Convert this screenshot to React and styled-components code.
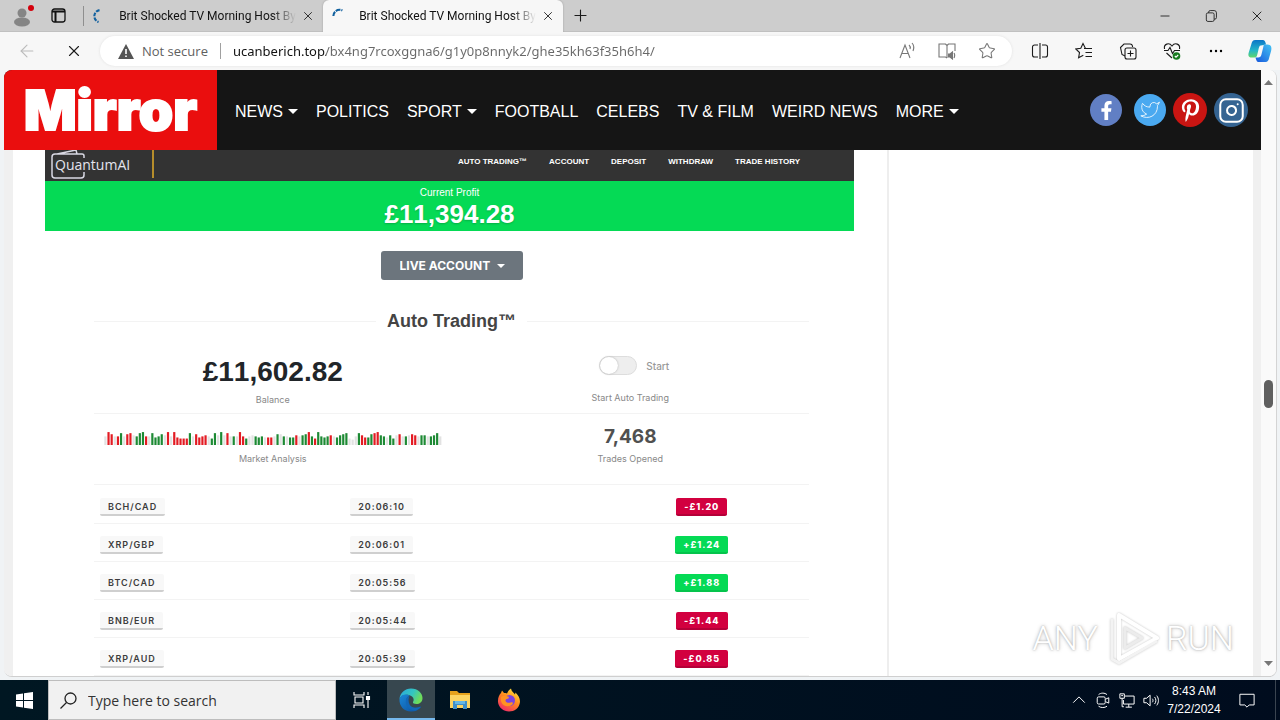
import { useState } from "react";
import styled, { createGlobalStyle } from "styled-components";
import { Instagram, Plus, X, Minus, ArrowLeft, Star, Search } from "lucide-react";
import { FaFacebookF, FaPinterestP } from "react-icons/fa";
import { FiTwitter } from "react-icons/fi";

const GlobalStyle = createGlobalStyle`
  * {
    box-sizing: border-box;
  }
  body {
    margin: 0;
    background: #f0f3f5;
    font-family: "Liberation Sans", Arial, sans-serif;
  }
  button, input, select {
    font: inherit;
    color: inherit;
    border: 0;
    padding: 0;
    background: none;
  }
  a {
    color: inherit;
    text-decoration: none;
  }
`;

const segoe = `"Open Sans", "Noto Sans", sans-serif`;
const inter = `Inter, "Liberation Sans", sans-serif`;

/* ===================================================
   Window
   =================================================== */
const Desktop = styled.div`
  display: flex;
  flex-direction: column;
  height: 100vh;
  overflow: hidden;
`;

const IconButton = styled.button`
  display: flex;
  align-items: center;
  align-self: center;
  justify-content: center;
  width: ${(props) => props.$width || 16}px;
  height: 24px;
  flex-shrink: 0;
  color: ${(props) => props.$color || "#1b1b1b"};
`;

/* ===================================================
   Tabs
   =================================================== */
const TabStrip = styled.div`
  display: flex;
  align-items: stretch;
  height: 32px;
  flex-shrink: 0;
  background: #cdcdcd;
  border-bottom: 1px solid #c0c0c0;
`;

const TabTools = styled.div`
  display: flex;
  align-items: center;
  gap: 16px;
  padding-left: 12px;
  width: 83px;
`;

const Tab = styled.div`
  display: flex;
  align-items: center;
  width: 240px;
  padding: 0 8px;
  gap: 5px;
  margin-bottom: -1px;
  background: ${(props) => (props.$active ? "#f7f7f7" : "transparent")};
  border-radius: ${(props) => (props.$active ? "6px 6px 0 0" : 0)};
  box-shadow: ${(props) => (props.$active ? "0 0 2px #999" : "inset 1px 0 #8f8f8f")};
  clip-path: ${(props) => (props.$active ? "inset(-2px -2px 0)" : "inset(6px 0)")};
`;

const TabTitle = styled.span`
  flex: 1;
  margin-left: 8px;
  white-space: nowrap;
  font-family: Roboto, sans-serif;
  font-size: 12px;
  line-height: 20px;
  color: #111;
  mask-image: linear-gradient(to left, transparent, #000 24px);
`;

const WindowControls = styled.div`
  display: flex;
  align-items: center;
  margin-left: auto;
`;

/* ===================================================
   Toolbar
   =================================================== */
const Toolbar = styled.div`
  display: flex;
  align-items: center;
  height: 38px;
  flex-shrink: 0;
  background: #f7f7f7;
`;

const Omnibox = styled.div`
  display: flex;
  flex: 1;
  align-items: center;
  height: 30px;
  margin-left: 6px;
  padding: 0 13px 0 18px;
  border-radius: 15px;
  background: #fff;
  box-shadow: 0 0 3px #e0e0e0;
  font-family: ${segoe};
  font-size: 13px;
`;

const NotSecure = styled.span`
  display: flex;
  align-items: center;
  gap: 8px;
  width: 103px;
  height: 16px;
  margin-right: 12px;
  border-right: 1px solid #a0a0a0;
  color: #5f5f5f;
  white-space: nowrap;
`;

const UrlInput = styled.input`
  flex: 1;
  min-width: 0;
  height: 24px;
  background: linear-gradient(to right, #111 93px, #686868 93px);
  background-clip: text;
  -webkit-text-fill-color: transparent;
  font-family: "Noto Sans", sans-serif;
  outline: none;
`;

const OmniActions = styled.div`
  display: flex;
  gap: 16px;
`;

const ToolActions = styled.div`
  display: flex;
  align-items: center;
  gap: 20px;
  padding: 0 8px 0 16px;
`;

/* ===================================================
   Viewport and site header
   =================================================== */
const Viewport = styled.div`
  display: flex;
  flex: 1;
  min-height: 0;
  margin: 0 3px 3px 4px;
  border-radius: 8px;
  overflow: hidden;
  background: #fff;
  border-right: 1px solid #d4d4d4;
  border-bottom: 1px solid #cfcfcf;
`;

const Page = styled.div`
  display: flex;
  flex: 1;
  flex-direction: column;
  min-width: 0;
`;

const SiteHeader = styled.header`
  position: relative;
  z-index: 1;
  display: flex;
  align-items: center;
  height: 80px;
  flex-shrink: 0;
  padding-right: 13px;
  background: #151515;
  color: #fff;
`;

const Brand = styled.a`
  display: flex;
  align-items: center;
  justify-content: center;
  width: 213px;
  height: 80px;
  background: #ea0e0e;
  font-family: ${inter};
  font-size: 55px;
  font-weight: 900;
  -webkit-text-stroke: 2px #fff;
`;

const SiteNav = styled.nav`
  display: flex;
  flex: 1;
  gap: 18px;
  padding: 3px 0 0 18px;
  font-size: 16px;
  line-height: 20px;
  white-space: nowrap;
`;

const SiteLink = styled.a`
  display: flex;
  align-items: center;
  gap: 5px;
`;

const Caret = styled.span`
  width: 0;
  height: 0;
  border: ${(props) => props.$size || 5}px solid transparent;
  border-top-color: currentColor;
  border-bottom: 0;
`;

const Socials = styled.div`
  display: flex;
  align-items: center;
  gap: ${(props) => props.$gap}px;
`;

const Social = styled.a`
  display: flex;
  align-items: center;
  justify-content: center;
  width: ${(props) => props.$size}px;
  height: ${(props) => props.$size}px;
  border-radius: 50%;
  background: ${(props) => props.$bg};
`;

const PageBody = styled.div`
  display: flex;
  flex: 1;
  min-height: 0;
  overflow: hidden;
  padding: 0 8px 0 9px;
  background: #f0f0f0;
`;

const Article = styled.main`
  flex: 1;
  min-width: 0;
  padding: 0 33px 0 32px;
  background: #fff;
`;

const Aside = styled.aside`
  flex: 0 0 366px;
  background: #fff;
  border-left: 2px solid #eeeeee;
`;

/* ===================================================
   Trading panel
   =================================================== */
const TradeHeader = styled.div`
  display: flex;
  align-items: center;
  justify-content: space-between;
  height: 40px;
  margin-top: -9px;
  padding: 0 54px 0 6px;
  background: #333;
  color: #fff;
`;

const TradeBrand = styled.div`
  position: relative;
  display: flex;
  align-items: center;
  width: 103px;
  height: 28px;
  margin-top: 6px;
  padding-left: 4px;
  border-right: 2px solid #b58d2b;
  font-family: ${segoe};
  font-size: 14px;
  color: #e4e4ee;

  svg {
    position: absolute;
    left: 0;
    top: 0;
  }
`;

const TradeNav = styled.nav`
  display: flex;
  gap: 22px;
  padding-top: 2px;
  font-size: 8px;
  font-weight: 700;
  line-height: 12px;
`;

const ProfitBar = styled.section`
  height: 50px;
  padding-top: 6px;
  background: #05da55;
  color: #fff;
  text-align: center;
`;

const ProfitLabel = styled.div`
  font-size: 10px;
  line-height: 12px;
`;

const ProfitValue = styled.div`
  font-size: 26px;
  font-weight: 700;
  font-kerning: none;
  line-height: 30px;
  text-shadow: 0 1px 2px rgba(0, 0, 0, 0.2);
`;

const Panel = styled.section`
  padding: 20px 45px 0 49px;
  font-family: ${inter};
`;

const AccountPicker = styled.label`
  position: relative;
  display: block;
  width: 142px;
  margin: 0 auto;
  color: #fff;

  ${Caret} {
    position: absolute;
    right: 18px;
    top: 13px;
  }
`;

const AccountSelect = styled.select`
  display: block;
  appearance: none;
  width: 100%;
  height: 29px;
  padding-left: 19px;
  border-radius: 3px;
  background: #6c757d;
  font-size: 12px;
  font-weight: 700;
`;

const PanelTitle = styled.h2`
  display: flex;
  align-items: center;
  gap: 11px;
  margin: 30px 0 11px;
  font-family: "Liberation Sans", Arial, sans-serif;
  font-size: 18px;
  line-height: 22px;
  color: #444;

  &::before,
  &::after {
    content: "";
    flex: 1;
    height: 1px;
    background: #f3f3f3;
  }
`;

const StatRow = styled.div`
  display: grid;
  grid-template-columns: 1fr 1fr;
  height: 71px;
  border-bottom: 1px solid #f3f3f3;
`;

const Stat = styled.div`
  display: flex;
  flex-direction: column;
  align-items: center;
  justify-content: flex-end;
  gap: ${(props) => props.$gap}px;
  padding-bottom: ${(props) => props.$bottom}px;
`;

const Balance = styled.div`
  font-family: "Liberation Sans", Arial, sans-serif;
  font-size: 28px;
  font-weight: 700;
  font-kerning: none;
  line-height: 32px;
  color: #212529;
`;

const TradeCount = styled.div`
  font-size: 19px;
  font-weight: 700;
  line-height: 24px;
  color: #505050;
`;

const StatLabel = styled.div`
  font-size: 9px;
  line-height: 12px;
  color: #888;
`;

const SwitchLabel = styled.label`
  display: flex;
  align-items: center;
  gap: 9px;
  padding-left: 8px;
  font-size: 10px;
  font-weight: 500;
  color: #999;
`;

const Switch = styled.input`
  appearance: none;
  width: 38px;
  height: 19px;
  margin: 0;
  border: 1px solid #ddd;
  border-radius: 10px;
  background: #eee;

  &::before {
    content: "";
    display: block;
    width: 18px;
    height: 17px;
    border-radius: 50%;
    background: #fff;
    box-shadow: 0 0 2px #aaa;
  }
  &:checked::before {
    margin-left: auto;
  }
`;

const TradeTable = styled.table`
  width: 100%;
  border-collapse: collapse;
  table-layout: fixed;
`;

const TradeRow = styled.tr`
  height: 38px;
  border-bottom: 1px solid #f3f3f3;
`;

const TradeCell = styled.td`
  width: ${(props) => props.$width};
  padding: 4px 6px 0;
  text-align: ${(props) => (props.$center ? "center" : "left")};
`;

const Chip = styled.span`
  display: inline-block;
  padding: 3px 8px 1px;
  background: #f8f8f8;
  border-bottom: 2px solid #cfcfcf;
  border-radius: 2px;
  color: #3c3c3c;
  font-size: 9px;
  font-weight: 600;
  line-height: 12px;
  letter-spacing: 1px;
  vertical-align: middle;
`;

const Result = styled(Chip)`
  background: ${(props) => (props.$win ? "#05da55" : "#d2003f")};
  border-color: ${(props) => (props.$win ? "#05c44c" : "#b40038")};
  color: #fff;
  font-weight: 800;
`;

/* ===================================================
   Scrollbar
   =================================================== */
const Scrollbar = styled.div`
  display: flex;
  flex-direction: column;
  align-items: center;
  justify-content: space-between;
  width: 15px;
  padding: 10px 0;
  background: #fafafa;
`;

const Thumb = styled.div`
  width: 9px;
  height: 28px;
  margin-top: 42px;
  border-radius: 5px;
  background: #606060;
`;

/* ===================================================
   Watermark
   =================================================== */
const Watermark = styled.div`
  position: absolute;
  right: 46px;
  bottom: 54px;
  z-index: 2;
  display: flex;
  align-items: center;
  gap: 5px;
  font-family: Roboto, "Liberation Sans", sans-serif;
  font-size: 34px;
  font-weight: 300;
  line-height: 56px;
  color: #fff;
  text-shadow: 0 0 2px #aaa, 0 0 4px #c8c8c8;

  svg {
    filter: drop-shadow(0 0 1px #c4c4c4);
  }
`;

/* ===================================================
   Taskbar
   =================================================== */
const Taskbar = styled.footer`
  display: flex;
  align-items: stretch;
  height: 40px;
  flex-shrink: 0;
  background: linear-gradient(to right, #001722, #000c1e);
  color: #fff;
  font-family: ${segoe};
`;

const TaskButton = styled.button`
  display: flex;
  align-items: center;
  justify-content: center;
  width: ${(props) => props.$width || 48}px;
  background: ${(props) => (props.$active ? "#37474f" : "transparent")};
  box-shadow: ${(props) => (props.$active ? "inset 0 -2px #76b9ed" : "none")};
`;

const SearchBox = styled.label`
  display: flex;
  align-items: center;
  gap: 11px;
  width: 288px;
  padding: 0 11px;
  background: #f1f1f1;
  border: 1px solid #bdbdbd;
  color: #222;
`;

const SearchInput = styled.input`
  flex: 1;
  min-width: 0;
  font-size: 14px;
  outline: none;

  &::placeholder {
    color: #333;
    opacity: 1;
  }
`;

const Tray = styled.div`
  display: flex;
  align-items: center;
  gap: 8px;
  margin-left: auto;
  margin-right: 4px;
  padding-right: 20px;
  border-right: 1px solid #3a4450;
`;

const Clock = styled.div`
  width: 54px;
  margin-right: 10px;
  text-align: center;
  white-space: nowrap;
  font-family: "Liberation Sans", sans-serif;
  font-size: 12px;
  line-height: 18px;
`;

/* ===================================================
   Data
   =================================================== */
const siteLinks = [
  { label: "NEWS", menu: true },
  { label: "POLITICS" },
  { label: "SPORT", menu: true },
  { label: "FOOTBALL" },
  { label: "CELEBS" },
  { label: "TV & FILM" },
  { label: "WEIRD NEWS" },
  { label: "MORE", menu: true },
];

const tradeLinks = ["AUTO TRADING™", "ACCOUNT", "DEPOSIT", "WITHDRAW", "TRADE HISTORY"];

const trades = [
  ["BCH/CAD", "20:06:10", "-£1.20"],
  ["XRP/GBP", "20:06:01", "+£1.24"],
  ["BTC/CAD", "20:05:56", "+£1.88"],
  ["BNB/EUR", "20:05:44", "-£1.44"],
  ["XRP/AUD", "20:05:39", "-£0.85"],
];

// colour letter followed by bar height
const bars =
  "w8 r12 r10 w8 r8 g11 w8 r10 r11 w9 g8 g11 g12 r8 w8 g11 g7 g8 g10 w9 r12 w8 r12 r7 r6 r6 r6 g11 w8 r10 r7 r8 r9 w8 g6 g11 w9 g12 w9 r11 w8 g8 w8 r12 r8 g6 w8 w9 g8 g7 g8 w7 r7 r7 w8 g10 w10 g8 w8 g7 g7 r9 w8 g9 g10 r12 g8 r6 g12 g8 g7 g8 r9 w8 g7 g9 g10 g11 w6 w5 w8 g11 r9 r7 g7 g10 r11 r12 g9 g8 w7 g9 g6 w9 r10 w8 g8 w9 r10 r9 w8 g9 g9 w8 g8 g9 g11 w8".split(" ");

const barColors = { r: "#e31b23", g: "#1d8a34", w: "#e2e2e2" };

/* ===================================================
   Icons
   =================================================== */
function LineIcon({ size = 18, children }) {
  return (
    <svg width={size} height={size} viewBox="0 0 18 18" fill="none" stroke="currentColor" strokeWidth="1.1">
      {children}
    </svg>
  );
}

function Spinner({ turned }) {
  return (
    <svg width="16" height="16" viewBox="0 0 16 16" fill="none" stroke="#12619f" strokeWidth="2.2">
      {turned ? (
        <path d="M2.500 8A6.500 6.500 0 0 1 12 2.200" strokeDasharray="5 1" />
      ) : (
        <path d="M9 1.800A6.500 6.500 0 0 0 8 14.400" strokeDasharray="4 1.200" />
      )}
    </svg>
  );
}

function Copilot() {
  return (
    <svg width="26" height="26" viewBox="0 0 26 26">
      <defs>
        <linearGradient id="cpA" x1="0" y1="0" x2="0" y2="1">
          <stop offset="0" stopColor="#0a75c8" />
          <stop offset=".6" stopColor="#24b6c8" />
          <stop offset="1" stopColor="#60d66c" />
        </linearGradient>
        <linearGradient id="cpB" x1="1" y1="0" x2="0" y2="1">
          <stop offset="0" stopColor="#43c3f4" />
          <stop offset="1" stopColor="#1756dc" />
        </linearGradient>
      </defs>
      <path d="M8 1h8c2 0 3 2 3.500 5L14 7c-2 0-2 2-3 6l-1 4c-.5 2-1 3-3 3H4c-4 0-4-3-3-6L3.500 6c.7-3 1.500-5 4.500-5z" fill="url(#cpA)" />
      <path d="M17 6h4c4 0 5 3 4 7l-2 7c-.7 3-1.500 5-4 5h-7c-3 0-3-3-4-5h3c2 0 3-1 3.500-3l2-8c.3-1.500.8-3 .5-3z" fill="url(#cpB)" />
    </svg>
  );
}

function EdgeLogo() {
  return (
    <svg width="24" height="24" viewBox="0 0 24 24">
      <defs>
        <linearGradient id="edgeTop" x1="0" y1="0" x2="1" y2=".4">
          <stop offset="0" stopColor="#2aa7e0" />
          <stop offset=".6" stopColor="#34c5c0" />
          <stop offset="1" stopColor="#6fdc5a" />
        </linearGradient>
        <linearGradient id="edgeLow" x1="0" y1="0" x2="1" y2="1">
          <stop offset="0" stopColor="#1a87d8" />
          <stop offset="1" stopColor="#0c4f9d" />
        </linearGradient>
      </defs>
      <path d="M.5 11C1 5 6 .5 12 .5c7 0 11.500 5 11.500 9.500 0 4-3 6-6 6-2.500 0-4-1-3.500-2 1-1.500 1-4-1-5.500C9 5.500 2 6.500.5 11z" fill="url(#edgeTop)" />
      <path d="M.5 11C2 6.500 7 5.500 10.500 7.500 7 9 6.500 14 9 17c2.500 3 7 4 12 1.500.8-.3 1 .2.500 1C19 22.500 16 23.700 12 23.500 5 23.500 0 18 .5 11z" fill="url(#edgeLow)" />
      <path d="M10.500 7.800C6 9 5.500 16 9.500 20c2 2 5 3 8 2.300 2-.8 3.500-2 4.400-3.500-5 2-9.500 1-11.200-2C9 13.500 9.500 10 10.500 7.800z" fill="#1267b8" />
    </svg>
  );
}

function Folder() {
  return (
    <svg width="22" height="20" viewBox="0 0 22 20">
      <path d="M1 1h7l2 2h11v5H1z" fill="#e6a21c" />
      <path d="M1 5h20v13H1z" fill="#fcd462" />
      <path d="M4 11h14v8h-4v-4H8v4H4z" fill="#3f8fc9" />
      <path d="M6 11h10v3H6z" fill="#65b7e5" />
    </svg>
  );
}

function FirefoxLogo() {
  return (
    <svg width="24" height="24" viewBox="0 0 24 24">
      <defs>
        <linearGradient id="fox" x1=".8" y1="0" x2=".2" y2="1">
          <stop offset="0" stopColor="#ffe83d" />
          <stop offset=".45" stopColor="#ff8a1e" />
          <stop offset="1" stopColor="#f0246c" />
        </linearGradient>
      </defs>
      <path d="M4 5l1-2.500L7 5c1 0 2 0 3 .5C11 3 12.500 1.500 14 .5c.3 3 3 4 4 6l.5-2C22 8 23.500 11 22.800 15 22 20 17.500 23.500 12 23.500S1.500 19.500 1 14C.8 10 2 7 4 5z" fill="url(#fox)" />
      <circle cx="12.500" cy="12.500" r="5.500" fill="#7a43e0" />
      <path d="M4 9c3-2 5-1 7-.5 1.500.3 1 2-.5 2.300-1.500.4-2 1-2 2 .5 2 3 2.500 5 1.700 2-.7 3 .5 2 1.700-2 2.300-6 2.800-9 .8C4 15 3.500 12 4 9z" fill="#ff9222" />
    </svg>
  );
}

function MarketChart() {
  return (
    <svg width="338" height="14" viewBox={`0 0 ${bars.length * 10} 13`} preserveAspectRatio="none" aria-hidden="true">
      {bars.map((bar, i) => {
        const height = Number(bar.slice(1));
        return <rect key={i} x={i * 10 + 1} y={13 - height} width="7" height={height} fill={barColors[bar[0]]} />;
      })}
    </svg>
  );
}

/* ===================================================
   Sections
   =================================================== */
function BrowserTabs() {
  return (
    <TabStrip>
      <TabTools>
        <IconButton $width={22} aria-label="Profile">
          <svg width="22" height="24" viewBox="0 0 22 24">
            <circle cx="10" cy="9" r="4.500" fill="#858585" />
            <ellipse cx="10" cy="18" rx="8" ry="4.500" fill="#858585" />
            <circle cx="19" cy="4" r="3" fill="#d4000c" />
          </svg>
        </IconButton>
        <IconButton aria-label="Tab actions">
          <svg width="15" height="15" viewBox="0 0 15 15" fill="none" stroke="#111" strokeWidth="1.3">
            <rect x="1" y="1" width="13" height="13" rx="2.500" />
            <path d="M1 3.500h13M4.500 4v10" strokeWidth="2" />
          </svg>
        </IconButton>
      </TabTools>
      <Tab>
        <Spinner />
        <TabTitle>Brit Shocked TV Morning Host By</TabTitle>
        <IconButton $width={14} aria-label="Close tab"><X size={14} strokeWidth={1.5} /></IconButton>
      </Tab>
      <Tab $active>
        <Spinner turned />
        <TabTitle>Brit Shocked TV Morning Host By</TabTitle>
        <IconButton $width={14} aria-label="Close tab"><X size={14} strokeWidth={1.5} /></IconButton>
      </Tab>
      <IconButton $width={34} aria-label="New tab"><Plus size={19} strokeWidth={1.4} /></IconButton>
      <WindowControls>
        <IconButton $width={46} aria-label="Minimize"><Minus size={14} strokeWidth={1.5} /></IconButton>
        <IconButton $width={46} aria-label="Restore">
          <LineIcon size={14}>
            <rect x="3" y="5" width="10" height="11" rx="2" />
            <path d="M6 5V4a2 2 0 0 1 2-2h5a3 3 0 0 1 3 3v6a2 2 0 0 1-2 2h-1" />
          </LineIcon>
        </IconButton>
        <IconButton $width={46} aria-label="Close"><X size={16} strokeWidth={1.4} /></IconButton>
      </WindowControls>
    </TabStrip>
  );
}

function AddressBar() {
  const [url, setUrl] = useState("ucanberich.top/bx4ng7rcoxggna6/g1y0p8nnyk2/ghe35kh63f35h6h4/");
  return (
    <Toolbar>
      <IconButton $width={54} $color="#bbb" aria-label="Back"><ArrowLeft size={20} strokeWidth={1.3} /></IconButton>
      <IconButton $width={40} aria-label="Stop"><X size={18} strokeWidth={1.5} /></IconButton>
      <Omnibox>
        <NotSecure>
          <svg width="16" height="15" viewBox="0 0 16 15">
            <path d="M8 0l8 15H0z" fill="#555" />
            <path d="M7.200 5h1.600v5H7.200zM7.200 11.500h1.600V13H7.200z" fill="#fff" />
          </svg>
          Not secure
        </NotSecure>
        <UrlInput aria-label="Address" value={url} onChange={(e) => setUrl(e.target.value)} />
        <OmniActions>
          <IconButton $width={24} $color="#777" aria-label="Read aloud">
            <LineIcon>
              <path d="M2 16L7 3l5 13M4 11.500h6M11 3c1.200 1 1.500 2.500 1 4M14 1c1.800 2 2.200 5 1 8" />
            </LineIcon>
          </IconButton>
          <IconButton $width={24} $color="#777" aria-label="Immersive reader">
            <LineIcon>
              <path d="M9 16V3.500L7.500 2H1v13h6.500L9 16M9 3.500L10.500 2H17v7" />
              <path d="M10.500 12h1.500l2.500-2v7L12 15h-1.500zM16 11c1 1.500 1 3 0 5" fill="currentColor" />
            </LineIcon>
          </IconButton>
          <IconButton $width={24} $color="#777" aria-label="Favorite"><Star size={18} strokeWidth={1.4} /></IconButton>
        </OmniActions>
      </Omnibox>
      <ToolActions>
        <IconButton $width={24} aria-label="Split screen">
          <LineIcon>
            <path d="M7 3H3.500A2 2 0 0 0 1.500 5v8a2 2 0 0 0 2 2H7M11 3h3.500a2 2 0 0 1 2 2v8a2 2 0 0 1-2 2H11M9 1v16" />
          </LineIcon>
        </IconButton>
        <IconButton $width={24} aria-label="Favorites">
          <LineIcon>
            <path d="M10.500 6.500L8 1.500 5.800 6.200.8 7l3.700 3.500-.9 5.300 4.700-2.500M9 6.500h8M10.500 10.500H17M10.500 14.500H17" />
          </LineIcon>
        </IconButton>
        <IconButton $width={24} aria-label="Collections">
          <LineIcon>
            <path d="M13.500 5V4a2.500 2.500 0 0 0-2.500-2H5L1.500 5.500 3 12.500 6 14" />
            <rect x="6" y="6" width="11" height="11" rx="2" />
            <path d="M11.500 8.500v6M8.500 11.500h6" />
          </LineIcon>
        </IconButton>
        <IconButton $width={24} aria-label="Browser essentials">
          <LineIcon>
            <path d="M1.500 7C.5 2 6 0 9 4c3-4 8.500-2 7.500 3M1 8.500h4l2-3 2.500 6 2-3H17M3.500 11L9 16" />
            <circle cx="13.500" cy="14" r="3.800" fill="#187b20" stroke="none" />
            <path d="M11.800 14l1.200 1.200 2.200-2.200" stroke="#fff" />
          </LineIcon>
        </IconButton>
        <IconButton $width={24} aria-label="More">
          <svg width="14" height="4" viewBox="0 0 14 4">
            <circle cx="2" cy="2" r="1.200" />
            <circle cx="7" cy="2" r="1.200" />
            <circle cx="12" cy="2" r="1.200" />
          </svg>
        </IconButton>
        <IconButton $width={24} aria-label="Copilot"><Copilot /></IconButton>
      </ToolActions>
    </Toolbar>
  );
}

function MirrorHeader() {
  return (
    <SiteHeader>
      <Brand href="#">Mirror</Brand>
      <SiteNav>
        {siteLinks.map((link) => (
          <SiteLink key={link.label} href="#">
            {link.label}
            {link.menu && <Caret />}
          </SiteLink>
        ))}
      </SiteNav>
      <Socials $gap={12}>
        <Social href="#" $size={32} $bg="#617fc4" aria-label="Facebook"><FaFacebookF size={19} /></Social>
        <Socials $gap={7}>
          <Social href="#" $size={32} $bg="#4aa9f0" aria-label="Twitter"><FiTwitter size={20} strokeWidth={1} /></Social>
          <Social href="#" $size={34} $bg="#c91512" aria-label="Pinterest"><FaPinterestP size={23} /></Social>
          <Social href="#" $size={34} $bg="#356492" aria-label="Instagram"><Instagram size={27} strokeWidth={1.8} /></Social>
        </Socials>
      </Socials>
    </SiteHeader>
  );
}

function TradingPanel() {
  const [running, setRunning] = useState(false);
  return (
    <Article>
      <TradeHeader>
        <TradeBrand>
          <svg width="36" height="29" viewBox="0 0 36 29" fill="none" stroke="#d9d9e4" strokeWidth="1.500">
            <path d="M33 8V6a2 2 0 0 0-2-2H4C2 4 1 5 1 7v18c0 2 1 3 3 3h26c2 0 3-1 3-3v-3M6 4L25 0l1 4" />
          </svg>
          QuantumAI
        </TradeBrand>
        <TradeNav>
          {tradeLinks.map((label) => (
            <a key={label} href="#">{label}</a>
          ))}
        </TradeNav>
      </TradeHeader>
      <ProfitBar>
        <ProfitLabel>Current Profit</ProfitLabel>
        <ProfitValue>£11,394.28</ProfitValue>
      </ProfitBar>
      <Panel>
        <AccountPicker>
          <AccountSelect aria-label="Account">
            <option>LIVE ACCOUNT</option>
          </AccountSelect>
          <Caret $size={4} />
        </AccountPicker>
        <PanelTitle>Auto Trading™</PanelTitle>
        <StatRow>
          <Stat $gap={6} $bottom={7}>
            <Balance>£11,602.82</Balance>
            <StatLabel>Balance</StatLabel>
          </Stat>
          <Stat $gap={17} $bottom={9}>
            <SwitchLabel>
              <Switch type="checkbox" checked={running} onChange={(e) => setRunning(e.target.checked)} />
              Start
            </SwitchLabel>
            <StatLabel>Start Auto Trading</StatLabel>
          </Stat>
        </StatRow>
        <StatRow>
          <Stat $gap={8} $bottom={19}>
            <MarketChart />
            <StatLabel>Market Analysis</StatLabel>
          </Stat>
          <Stat $gap={4} $bottom={19}>
            <TradeCount>7,468</TradeCount>
            <StatLabel>Trades Opened</StatLabel>
          </Stat>
        </StatRow>
        <TradeTable>
          <tbody>
            {trades.map(([pair, time, result]) => (
              <TradeRow key={time}>
                <TradeCell $width="35%"><Chip>{pair}</Chip></TradeCell>
                <TradeCell $width="35%"><Chip>{time}</Chip></TradeCell>
                <TradeCell $width="30%" $center><Result $win={result[0] === "+"}>{result}</Result></TradeCell>
              </TradeRow>
            ))}
          </tbody>
        </TradeTable>
      </Panel>
    </Article>
  );
}

function WindowsTaskbar() {
  return (
    <Taskbar>
      <TaskButton aria-label="Start">
        <svg width="17" height="17" viewBox="0 0 17 17" fill="#fff">
          <path d="M0 2.400L7 1.400V8H0zM8 1.200L17 0v8H8zM0 9h7v6.600L0 14.600zM8 9h9v8L8 15.800z" />
        </svg>
      </TaskButton>
      <SearchBox>
        <svg width="17" height="17" viewBox="0 0 17 17" fill="none" stroke="#222" strokeWidth="1.300">
          <circle cx="10.500" cy="6.500" r="5.500" />
          <path d="M6.500 10.500L.5 16.500" />
        </svg>
        <SearchInput placeholder="Type here to search" />
      </SearchBox>
      <TaskButton $width={51} aria-label="Task view">
        <LineIcon>
          <path d="M1 1v3h10V1M1 17v-3h10v3M2 6h8v6H2zM15 1v3M15 9v8" />
          <path d="M13.500 5.500h3v3h-3z" fill="currentColor" />
        </LineIcon>
      </TaskButton>
      <TaskButton $active aria-label="Edge"><EdgeLogo /></TaskButton>
      <TaskButton $width={49} aria-label="File Explorer"><Folder /></TaskButton>
      <TaskButton $width={49} aria-label="Firefox"><FirefoxLogo /></TaskButton>
      <Tray>
        <IconButton $color="#fff" aria-label="Hidden icons">
          <LineIcon size={16}><path d="M2.500 12L9 5.500l6.500 6.500" /></LineIcon>
        </IconButton>
        <IconButton $color="#fff" aria-label="Meet now">
          <LineIcon size={16}>
            <rect x="2.500" y="5.500" width="9" height="8" rx="1.500" />
            <path d="M12 8l3.500-1.500v6L12 11M4 3c2.500-2.300 7-2.300 9.500 0M4 16c2.500 2 7 2 9.500 0" />
          </LineIcon>
        </IconButton>
        <IconButton $color="#fff" aria-label="Network">
          <LineIcon size={17}>
            <path d="M6.500 4H17v9H5V8.500M11 13v3.500M7.500 16.500h7M1 1.500h5v5H1zM3.500 6.500V16h2M2.500 3.500h2" />
          </LineIcon>
        </IconButton>
        <IconButton $color="#fff" aria-label="Volume">
          <LineIcon size={17}>
            <path d="M1 6.500h3L8 3v12l-4-3.500H1zM10.500 7c1 1.300 1 2.700 0 4M13 5c2 2.500 2 5.500 0 8M15.500 3.500c2.500 3.500 2.500 7.500 0 11" />
          </LineIcon>
        </IconButton>
        <Clock>
          8:43 AM
          <br />
          7/22/2024
        </Clock>
        <IconButton $color="#fff" aria-label="Notifications">
          <LineIcon size={17}><path d="M1 2h16v12h-5.500L9 16.500 6.500 14H1z" /></LineIcon>
        </IconButton>
      </Tray>
    </Taskbar>
  );
}

export default function App() {
  return (
    <Desktop>
      <GlobalStyle />
      <BrowserTabs />
      <AddressBar />
      <Viewport>
        <Page>
          <MirrorHeader />
          <PageBody>
            <TradingPanel />
            <Aside />
          </PageBody>
        </Page>
        <Scrollbar>
          <svg width="9" height="5" viewBox="0 0 9 5"><path d="M0 5l4.500-5L9 5z" fill="#777" /></svg>
          <Thumb />
          <svg width="9" height="5" viewBox="0 0 9 5"><path d="M0 0l4.500 5L9 0z" fill="#777" /></svg>
        </Scrollbar>
      </Viewport>
      <WindowsTaskbar />
      <Watermark>
        ANY
        <svg width="58" height="54" viewBox="0 0 58 54" fill="none" stroke="#fff" strokeWidth="4" strokeLinejoin="round">
          <path d="M16 4v44l38-21z" />
          <path d="M22 17v20l17-10z" stroke="#ececec" strokeWidth="3" />
          <path d="M9 8v40l7 4 38-22" stroke="#f3f3f3" strokeWidth="3" />
        </svg>
        RUN
      </Watermark>
    </Desktop>
  );
}
